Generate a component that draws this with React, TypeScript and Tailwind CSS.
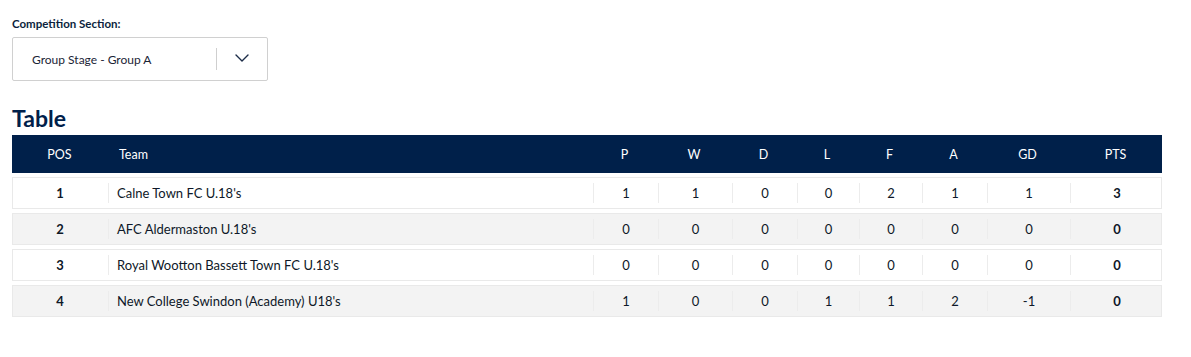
import { ChevronDown } from 'lucide-react';

type Row = { pos: number; team: string; p: number; w: number; d: number; l: number; f: number; a: number; gd: number; pts: number };

const rows: Row[] = [
  { pos: 1, team: "Calne Town FC U.18's", p: 1, w: 1, d: 0, l: 0, f: 2, a: 1, gd: 1, pts: 3 },
  { pos: 2, team: "AFC Aldermaston U.18's", p: 0, w: 0, d: 0, l: 0, f: 0, a: 0, gd: 0, pts: 0 },
  { pos: 3, team: "Royal Wootton Bassett Town FC U.18's", p: 0, w: 0, d: 0, l: 0, f: 0, a: 0, gd: 0, pts: 0 },
  { pos: 4, team: "New College Swindon (Academy) U18's", p: 1, w: 0, d: 0, l: 1, f: 1, a: 2, gd: -1, pts: 0 },
];

const cols = 'grid grid-cols-[95px_485px_65px_74px_65px_62px_63px_65px_83px_93px]';
const heads = ['P', 'W', 'D', 'L', 'F', 'A', 'GD', 'PTS'];

function Cell({ children, bold }: { children: React.ReactNode; bold?: boolean }) {
  return (
    <div className="flex items-center justify-center">
      <div className="h-[20px] w-px bg-[#ececec]" />
      <div className={`flex-1 text-center pt-[2px] ${bold ? 'font-bold' : ''}`}>{children}</div>
    </div>
  );
}

export default function App() {
  return (
    <div className="bg-white w-[1191px] h-[357px] px-3 pt-[17px] text-[#0e1828]" style={{ fontFamily: 'Lato, "Open Sans", sans-serif' }}>
      {/* Section select */}
      <div className="text-[11.5px] font-bold text-[#0c1f3d] leading-[14px]">Competition Section:</div>
      <div className="mt-[6px] w-[256px] h-[44px] border border-[#d0d0d0] rounded-[2px] flex items-center">
        <span className="pl-[19px] pt-[2px] flex-1 text-[12px] text-[#1a2436]">Group Stage - Group A</span>
        <div className="h-[22px] w-px bg-[#cfcfcf]" />
        <div className="w-[50px] flex items-center justify-center pb-[2px]">
          <ChevronDown size={24} strokeWidth={1.4} className="text-[#1c2c48]" />
        </div>
      </div>

      {/* Table */}
      <h2 className="mt-[23px] text-[23px] font-bold text-[#00204a] leading-[28px]">Table</h2>
      <div className="mt-[3px] w-[1150px]">
        <div className={`${cols} h-[38px] bg-[#00204a] text-white text-[12.5px] items-center pt-[2px]`}>
          <div className="text-center">POS</div>
          <div className="pl-3">Team</div>
          {heads.map((h) => (
            <div key={h} className="text-center">{h}</div>
          ))}
        </div>
        <div className="mt-1 flex flex-col gap-1">
          {rows.map((r, i) => (
            <div
              key={r.pos}
              className={`${cols} h-[32px] border border-[#e9e9e9] text-[13px] items-center ${i % 2 ? 'bg-[#f3f3f3]' : 'bg-white'}`}
            >
              <div className="text-center font-bold -ml-px pt-[2px]">{r.pos}</div>
              <div className="flex items-center">
                <div className="h-[20px] w-px bg-[#ececec]" />
                <span className="pl-2 pt-[2px]">{r.team}</span>
              </div>
              <Cell>{r.p}</Cell>
              <Cell>{r.w}</Cell>
              <Cell>{r.d}</Cell>
              <Cell>{r.l}</Cell>
              <Cell>{r.f}</Cell>
              <Cell>{r.a}</Cell>
              <Cell>{r.gd}</Cell>
              <Cell bold>{r.pts}</Cell>
            </div>
          ))}
        </div>
      </div>
    </div>
  );
}
